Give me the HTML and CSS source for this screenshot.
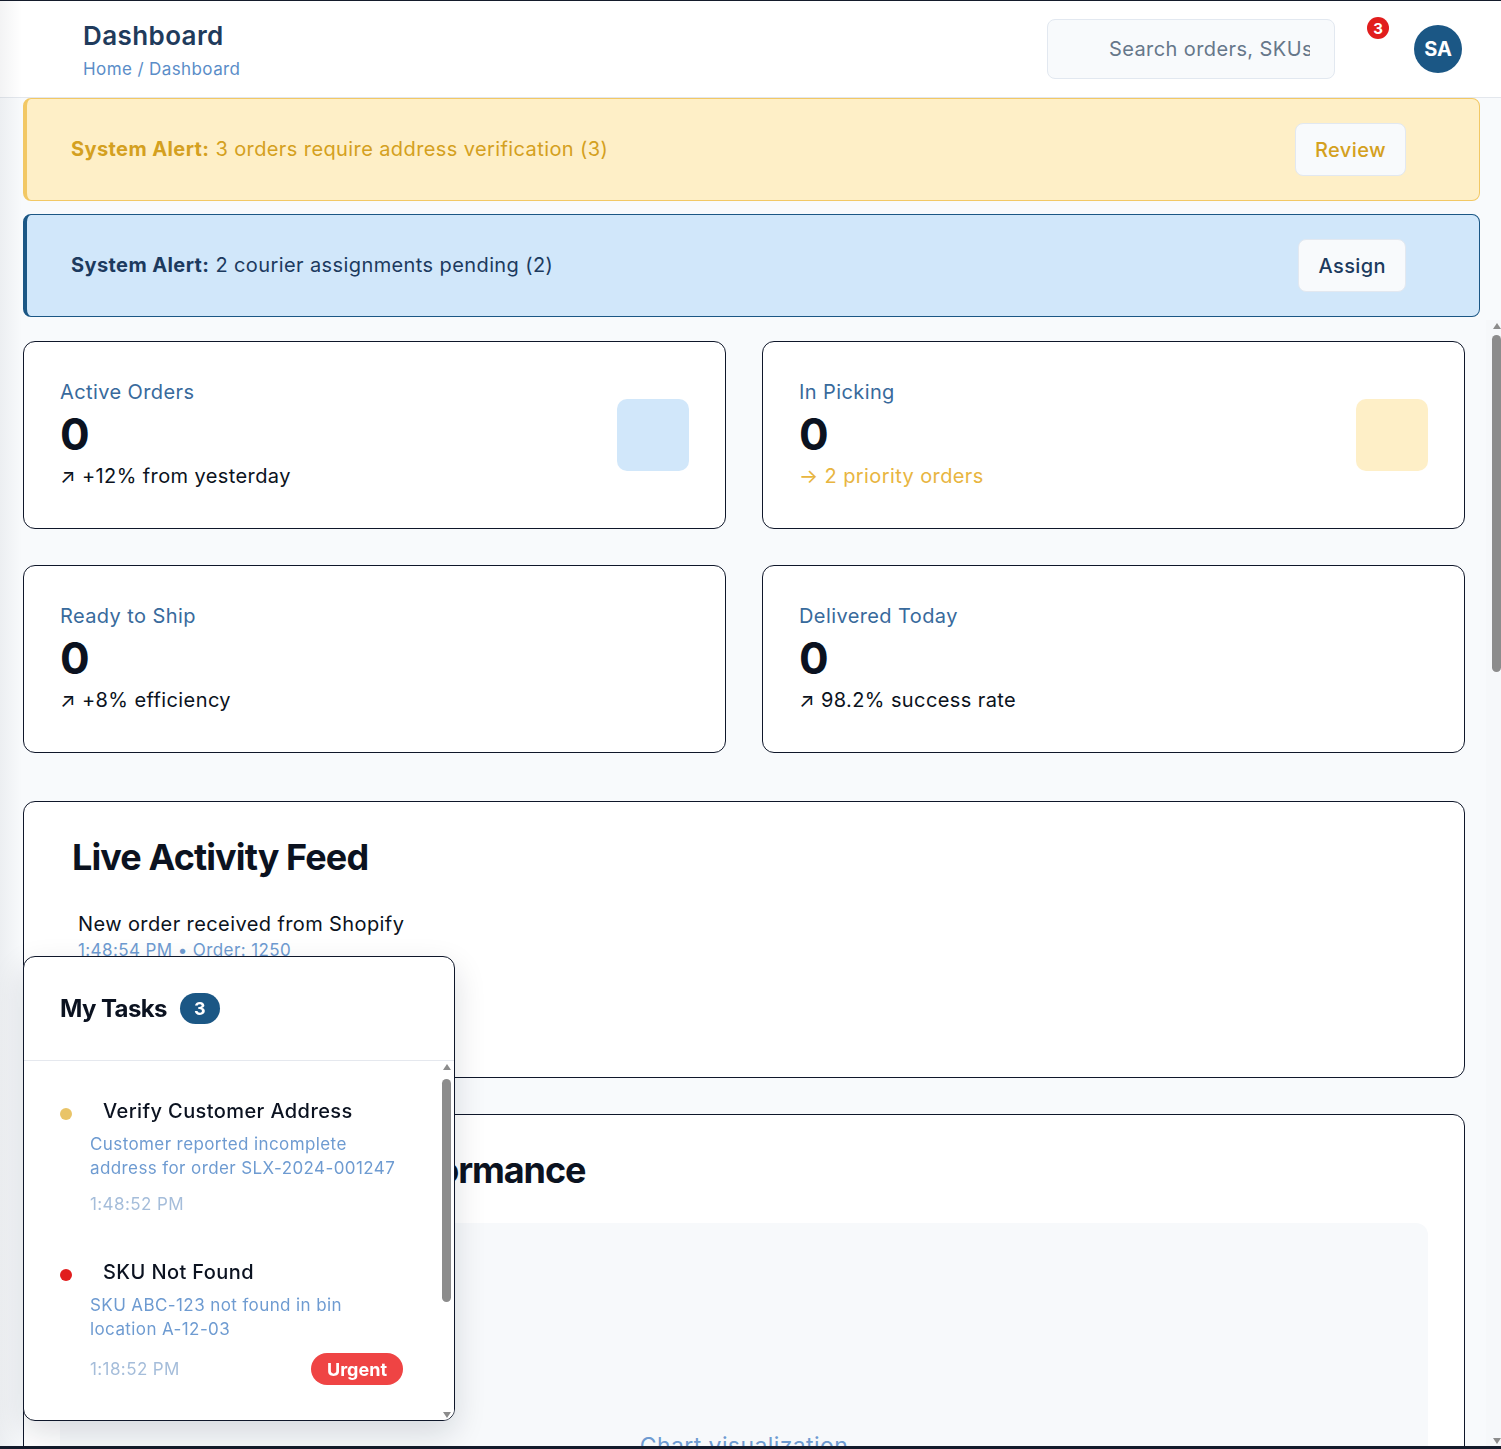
FILE: index.html
```html
<!DOCTYPE html>
<html lang="en">
<head>
<meta charset="utf-8">
<title>Dashboard</title>
<link rel="stylesheet" href="styles.css">
</head>
<body>
<div class="app">
  <header class="topbar">
    <div class="title-block">
      <h1 class="page-title">Dashboard</h1>
      <div class="crumbs">Home / Dashboard</div>
    </div>
    <div class="top-actions">
      <input class="search" type="text" placeholder="Search orders, SKUs">
      <div class="bell"><span class="bell-badge">3</span></div>
      <div class="avatar">SA</div>
    </div>
  </header>

  <section class="alerts">
    <div class="alert alert-warn">
      <p class="alert-text"><strong>System Alert:</strong> 3 orders require address verification (3)</p>
      <button class="alert-btn">Review</button>
    </div>
    <div class="alert alert-info">
      <p class="alert-text"><strong>System Alert:</strong> 2 courier assignments pending (2)</p>
      <button class="alert-btn">Assign</button>
    </div>
  </section>

  <div class="content-row">
    <main class="scroll">
      <div class="stats">
        <div class="stat-card">
          <div class="stat-body">
            <div class="stat-label">Active Orders</div>
            <div class="stat-value">0</div>
            <div class="stat-sub">↗ +12% from yesterday</div>
          </div>
          <div class="stat-icon icon-blue"></div>
        </div>
        <div class="stat-card">
          <div class="stat-body">
            <div class="stat-label">In Picking</div>
            <div class="stat-value">0</div>
            <div class="stat-sub sub-gold">→ 2 priority orders</div>
          </div>
          <div class="stat-icon icon-yellow"></div>
        </div>
        <div class="stat-card">
          <div class="stat-body">
            <div class="stat-label">Ready to Ship</div>
            <div class="stat-value">0</div>
            <div class="stat-sub">↗ +8% efficiency</div>
          </div>
        </div>
        <div class="stat-card">
          <div class="stat-body">
            <div class="stat-label">Delivered Today</div>
            <div class="stat-value">0</div>
            <div class="stat-sub">↗ 98.2% success rate</div>
          </div>
        </div>
      </div>

      <section class="card feed">
        <h2 class="card-title">Live Activity Feed</h2>
        <div class="feed-list">
          <div class="feed-item">
            <div class="feed-text">New order received from Shopify</div>
            <div class="feed-meta">1:48:54 PM • Order: 1250</div>
          </div>
          <div class="feed-item">
            <div class="feed-text">Order packed at station 2</div>
            <div class="feed-meta">1:47:12 PM • Order: 1246</div>
          </div>
        </div>
      </section>

      <section class="card perf">
        <h2 class="card-title perf-title">Order Processing Performance</h2>
        <div class="chart">Chart visualization</div>
      </section>
    </main>
    <div class="rail rail-main">
      <span class="rail-btn"><span class="tri tri-up"></span></span>
      <div class="rail-track"><div class="rail-thumb"></div></div>
      <span class="rail-btn"><span class="tri tri-down"></span></span>
    </div>
  </div>

  <aside class="tasks">
    <div class="tasks-head">
      <span class="tasks-title">My Tasks</span>
      <span class="tasks-count">3</span>
    </div>
    <div class="tasks-body">
      <div class="tasks-list">
        <div class="task">
          <span class="dot dot-yellow"></span>
          <div class="task-body">
            <div class="task-title">Verify Customer Address</div>
            <div class="task-desc">Customer reported incomplete address for order SLX-2024-001247</div>
            <div class="task-meta"><span class="task-time">1:48:52 PM</span></div>
          </div>
        </div>
        <div class="task">
          <span class="dot dot-red"></span>
          <div class="task-body">
            <div class="task-title">SKU Not Found</div>
            <div class="task-desc">SKU ABC-123 not found in bin location A-12-03</div>
            <div class="task-meta"><span class="task-time">1:18:52 PM</span><span class="urgent">Urgent</span></div>
          </div>
        </div>
        <div class="task">
          <span class="dot dot-blue"></span>
          <div class="task-body">
            <div class="task-title">Courier Pickup Delayed</div>
            <div class="task-desc">Courier for zone B has not arrived for the scheduled pickup window</div>
            <div class="task-meta"><span class="task-time">12:48:52 PM</span></div>
          </div>
        </div>
      </div>
      <div class="rail rail-tasks">
        <span class="rail-btn"><span class="tri tri-up"></span></span>
        <div class="rail-track"><div class="rail-thumb"></div></div>
        <span class="rail-btn"><span class="tri tri-down"></span></span>
      </div>
    </div>
  </aside>
</div>
</body>
</html>
```

FILE: styles.css
```css
* { box-sizing: border-box; }

html, body {
  margin: 0;
  padding: 0;
  height: 100%;
}

body {
  background: #141b2b;
  font-family: Inter, "Noto Sans", "Liberation Sans", sans-serif;
  letter-spacing: 0.025em;
  color: #0b1220;
  overflow: hidden;
}

.app {
  position: relative;
  margin-top: 1px;
  height: 1445px;
  background: #f8fafc;
  display: flex;
  flex-direction: column;
}

.app::before {
  content: "";
  position: absolute;
  left: 0;
  top: 0;
  bottom: 0;
  width: 22px;
  background: linear-gradient(to right, rgba(15, 23, 42, 0.05), rgba(15, 23, 42, 0));
  pointer-events: none;
  z-index: 5;
}

/* Header */
.topbar {
  flex: none;
  height: 97px;
  background: #ffffff;
  border-bottom: 1px solid #e3e7ed;
  display: flex;
  align-items: center;
  justify-content: space-between;
  padding: 0 39px 0 83px;
}

.title-block {
  display: flex;
  flex-direction: column;
  margin-top: 3px;
}

.page-title {
  margin: 0;
  font-size: 26px;
  line-height: 32px;
  font-weight: 600;
  color: #1f3b5c;
}

.crumbs {
  font-size: 17px;
  line-height: 24px;
  color: #5a8dc8;
  margin-top: 5px;
}

.top-actions {
  display: flex;
  align-items: center;
}

.search {
  width: 288px;
  height: 60px;
  padding: 0 24px 0 61px;
  background: #f8fafc;
  border: 1px solid #e2e8f0;
  border-radius: 8px;
  font-family: inherit;
  letter-spacing: inherit;
  font-size: 20px;
  color: #334155;
  outline: none;
  margin-top: -1px;
}

.search::placeholder {
  color: #66778a;
}

.bell {
  position: relative;
  width: 40px;
  height: 40px;
  margin-left: 20px;
}

.bell-badge {
  position: absolute;
  top: -12px;
  right: 6px;
  width: 22px;
  height: 22px;
  border-radius: 50%;
  background: #e11d1d;
  color: #ffffff;
  font-size: 15px;
  font-weight: 700;
  letter-spacing: 0;
  display: flex;
  align-items: center;
  justify-content: center;
}

.avatar {
  width: 48px;
  height: 48px;
  margin-left: 19px;
  border-radius: 50%;
  background: #1b5785;
  color: #ffffff;
  font-size: 20px;
  font-weight: 700;
  letter-spacing: 0;
  display: flex;
  align-items: center;
  justify-content: center;
}

/* Alerts */
.alerts {
  flex: none;
  padding: 0 21px 3px 23px;
  display: flex;
  flex-direction: column;
  gap: 13px;
}

.alert {
  display: flex;
  align-items: center;
  justify-content: space-between;
  padding: 24px 73px 24px 44px;
  border: 1px solid;
  border-left-width: 4px;
  border-radius: 8px;
}

.alert-warn {
  background: #feefc7;
  border-color: #f2c865;
  color: #d4a020;
}

.alert-info {
  background: #d1e7fa;
  border-color: #1b5785;
  color: #1c3a5e;
}

.alert-text {
  margin: 0;
  font-size: 20px;
  line-height: 28px;
  margin-top: -1px;
}

.alert-text strong {
  font-weight: 700;
}

.alert-btn {
  height: 53px;
  padding: 0 19px;
  background: #f8fafc;
  border: 1px solid #e2e8f0;
  border-radius: 8px;
  font-family: inherit;
  letter-spacing: inherit;
  font-size: 20px;
  font-weight: 500;
  color: inherit;
}

/* Content area with its scroll rail */
.content-row {
  flex: 1;
  min-height: 0;
  display: flex;
}

.scroll {
  flex: 1;
  min-width: 0;
  overflow: hidden;
  padding: 21px 21px 40px 23px;
}

/* Drawn scroll rails */
.rail {
  flex: none;
  width: 15px;
  display: flex;
  flex-direction: column;
}

.rail-main {
  background: #f6f8fa;
  padding-left: 6px;
}

.rail-tasks {
  background: #ffffff;
  padding-left: 3px;
  padding-right: 3px;
}

.rail-btn {
  flex: none;
  height: 15px;
  display: flex;
  align-items: center;
  justify-content: center;
}

.tri {
  width: 0;
  height: 0;
  border-left: 4.5px solid transparent;
  border-right: 4.5px solid transparent;
}

.tri-up {
  border-bottom: 6px solid #8c8c8c;
  margin-top: -4px;
}

.tri-down {
  border-top: 6px solid #8c8c8c;
  margin-top: 4px;
}

.rail-track {
  flex: 1;
  min-height: 0;
}

.rail-thumb {
  width: 9px;
  background: #8c8c8c;
  border-radius: 5px;
}

.rail-main .rail-thumb {
  height: 337px;
}

.rail-tasks .rail-thumb {
  margin-top: 3px;
  height: 223px;
}

.stats {
  display: grid;
  grid-template-columns: 1fr 1fr;
  gap: 36px;
}

.stat-card {
  height: 188px;
  background: #ffffff;
  border: 1px solid #0f172a;
  border-radius: 12px;
  padding: 36px;
  display: flex;
  align-items: center;
  justify-content: space-between;
}

.stat-body {
  display: flex;
  flex-direction: column;
  align-self: flex-start;
}

.stat-label {
  font-size: 20px;
  line-height: 28px;
  color: #386a9c;
}

.stat-value {
  font-size: 44px;
  line-height: 53px;
  font-weight: 700;
  color: #0b1220;
  margin: 2px 0 1px;
}

.stat-sub {
  font-size: 20px;
  line-height: 28px;
  color: #0b1220;
}

.sub-gold {
  color: #e8b540;
}

.stat-icon {
  width: 72px;
  height: 72px;
  border-radius: 10px;
}

.icon-blue { background: #d1e7fa; }
.icon-yellow { background: #feefc7; }

.card {
  background: #ffffff;
  border: 1px solid #0f172a;
  border-radius: 12px;
  padding: 36px;
}

.feed {
  margin-top: 48px;
}

.perf {
  margin-top: 36px;
}

.card-title {
  margin: 0;
  padding: 0 12px;
  font-size: 36px;
  line-height: 38px;
  font-weight: 700;
  color: #0b1220;
  letter-spacing: -0.025em;
}

.perf-title {
  letter-spacing: -0.03em;
}

.feed-list {
  margin-top: 34px;
  display: flex;
  flex-direction: column;
  gap: 27px;
}

.feed-item {
  padding: 0 18px;
}

.feed-text {
  font-size: 20px;
  line-height: 28px;
  color: #0b1220;
}

.feed-meta {
  font-size: 17px;
  line-height: 24px;
  color: #6e9bd1;
}

.chart {
  margin-top: 34px;
  height: 446px;
  background: #f7f9fb;
  border-radius: 12px;
  display: flex;
  align-items: center;
  justify-content: center;
  font-size: 23px;
  color: #6e9bd1;
}

/* Tasks panel (floating) */
.tasks {
  position: fixed;
  left: 23px;
  bottom: 28px;
  width: 432px;
  height: 465px;
  background: #ffffff;
  border: 1px solid #0f172a;
  border-radius: 12px;
  box-shadow: 0 12px 32px rgba(15, 23, 42, 0.14);
  display: flex;
  flex-direction: column;
  overflow: hidden;
  z-index: 10;
}

.tasks-head {
  flex: none;
  display: flex;
  align-items: center;
  padding: 36px 36px;
  border-bottom: 1px solid #e5e8ee;
}

.tasks-title {
  font-size: 24px;
  line-height: 30px;
  font-weight: 700;
  color: #0b1220;
  letter-spacing: -0.025em;
}

.tasks-count {
  margin-left: 13px;
  height: 31px;
  padding: 0 14px;
  border-radius: 16px;
  background: #1b5785;
  color: #ffffff;
  font-size: 18px;
  font-weight: 700;
  letter-spacing: 0;
  display: flex;
  align-items: center;
}

.tasks-body {
  flex: 1;
  min-height: 0;
  display: flex;
}

.tasks-list {
  flex: 1;
  min-width: 0;
  overflow: hidden;
  padding: 16px 0;
}

.task {
  display: grid;
  grid-template-columns: 30px 1fr;
  padding: 22px 36px;
}

.dot {
  width: 12px;
  height: 12px;
  border-radius: 50%;
  margin-top: 9px;
}

.dot-yellow { background: #e9c468; }
.dot-red { background: #e11d1d; }
.dot-blue { background: #1b5785; }

.task-title {
  padding-left: 13px;
  font-size: 20px;
  line-height: 24px;
  font-weight: 500;
  color: #0b1220;
}

.task-desc {
  margin-top: 9px;
  font-size: 17px;
  line-height: 24px;
  color: #6e9bd1;
}

.task-meta {
  margin-top: 12px;
  display: flex;
  align-items: center;
  justify-content: space-between;
}

.task-time {
  font-size: 17px;
  line-height: 24px;
  color: #a5bdda;
}

.urgent {
  height: 32px;
  padding: 0 16px;
  border-radius: 16px;
  background: #ef4444;
  color: #ffffff;
  font-size: 18px;
  font-weight: 700;
  letter-spacing: 0;
  display: flex;
  align-items: center;
}
```
